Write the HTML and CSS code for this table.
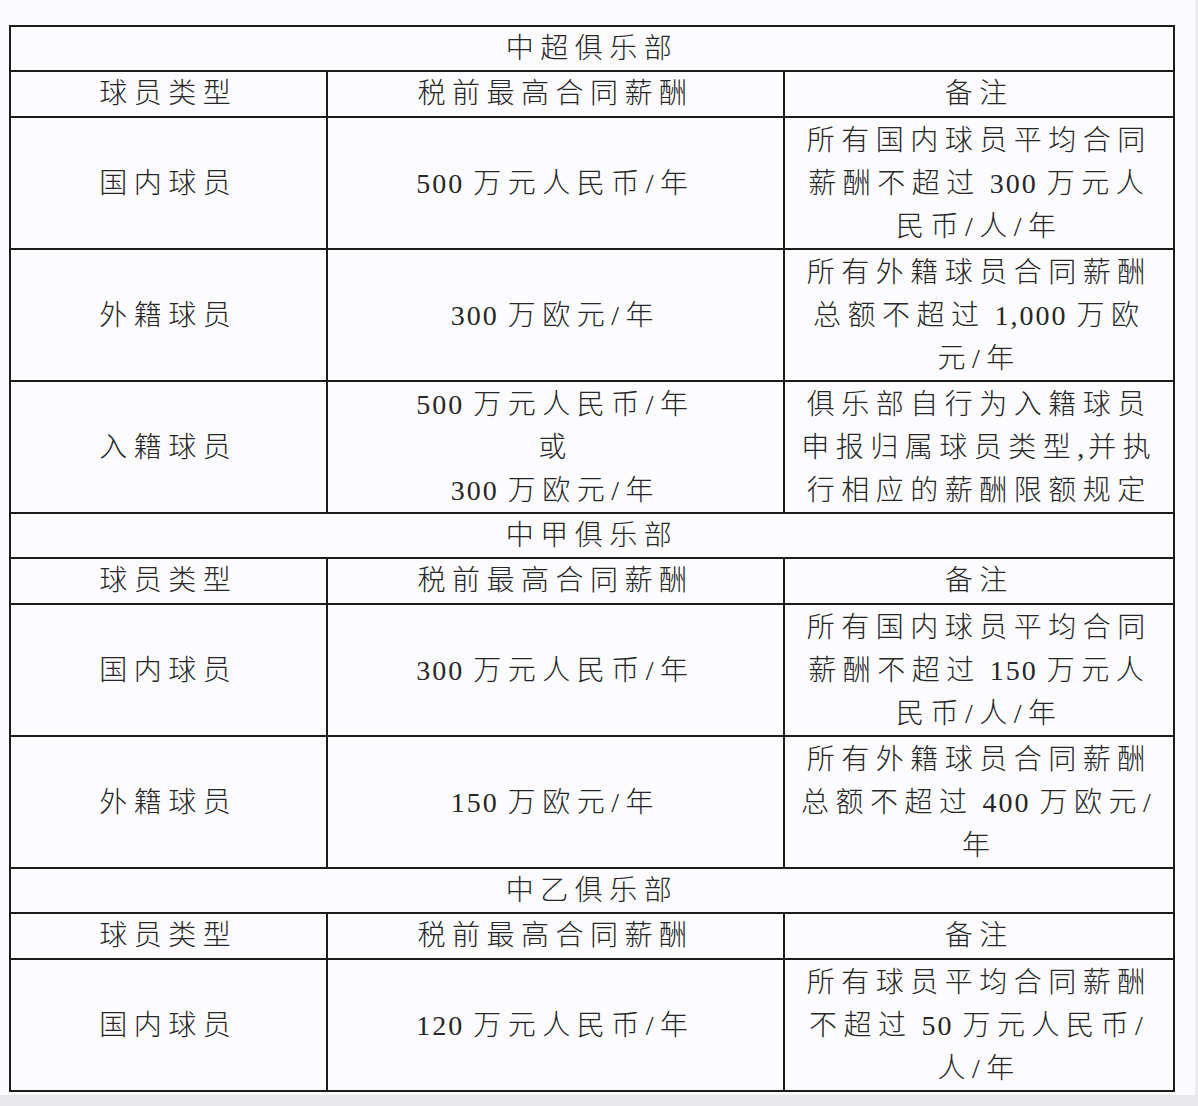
FILE: index.html
```html
<!DOCTYPE html>
<html lang="zh-CN">
<head>
<meta charset="utf-8">
<title>俱乐部薪酬限额</title>
<link rel="stylesheet" href="styles.css">
</head>
<body>
<div class="page">
  <table class="salary">
    <colgroup>
      <col class="c1"><col class="c2"><col class="c3">
    </colgroup>
    <tbody>
      <tr class="title"><td colspan="3">中超俱乐部</td></tr>
      <tr class="head"><td>球员类型</td><td>税前最高合同薪酬</td><td>备注</td></tr>
      <tr class="data">
        <td>国内球员</td>
        <td><span class="num">500 </span>万元人民币/年</td>
        <td>所有国内球员平均合同<br>薪酬不超过<span class="num"> 300 </span>万元人<br>民币/人/年</td>
      </tr>
      <tr class="data">
        <td>外籍球员</td>
        <td><span class="num">300 </span>万欧元/年</td>
        <td>所有外籍球员合同薪酬<br>总额不超过<span class="num"> 1,000 </span>万欧<br>元/年</td>
      </tr>
      <tr class="data">
        <td>入籍球员</td>
        <td><span class="num">500 </span>万元人民币/年<br>或<br><span class="num">300 </span>万欧元/年</td>
        <td>俱乐部自行为入籍球员<br>申报归属球员类型<span class="comma">,</span>并执<br>行相应的薪酬限额规定</td>
      </tr>
      <tr class="title"><td colspan="3">中甲俱乐部</td></tr>
      <tr class="head"><td>球员类型</td><td>税前最高合同薪酬</td><td>备注</td></tr>
      <tr class="data">
        <td>国内球员</td>
        <td><span class="num">300 </span>万元人民币/年</td>
        <td>所有国内球员平均合同<br>薪酬不超过<span class="num"> 150 </span>万元人<br>民币/人/年</td>
      </tr>
      <tr class="data">
        <td>外籍球员</td>
        <td><span class="num">150 </span>万欧元/年</td>
        <td>所有外籍球员合同薪酬<br>总额不超过<span class="num"> 400 </span>万欧元/<br>年</td>
      </tr>
      <tr class="title"><td colspan="3">中乙俱乐部</td></tr>
      <tr class="head"><td>球员类型</td><td>税前最高合同薪酬</td><td>备注</td></tr>
      <tr class="data">
        <td>国内球员</td>
        <td><span class="num">120 </span>万元人民币/年</td>
        <td>所有球员平均合同薪酬<br>不超过<span class="num"> 50 </span>万元人民币/<br>人/年</td>
      </tr>
    </tbody>
  </table>
</div>
<div class="strip"></div>
</body>
</html>
```

FILE: styles.css
```css
html, body {
  margin: 0;
  padding: 0;
}

body {
  background: #fbfbfd;
  font-family: "Liberation Serif", "Noto Sans CJK SC", serif;
  color: #262626;
  width: 1198px;
  height: 1106px;
  overflow: hidden;
}

.page {
  box-sizing: border-box;
  height: 1095px;
  padding: 25px 0 0 9px;
  border-right: 3px solid #ececef;
  width: 1198px;
}

.strip {
  height: 11px;
  background: #e8e8ea;
}

.salary {
  table-layout: fixed;
  border-collapse: separate;
  border-spacing: 0;
  width: 1166px;
  border-top: 2px solid #1c1c1c;
  border-left: 2px solid #1c1c1c;
  background: #fcfcfe;
}

.c1 { width: 316px; }
.c2 { width: 457px; }
.c3 { width: 389px; }

.salary td {
  padding: 0;
  border-right: 2px solid #1c1c1c;
  border-bottom: 2px solid #1c1c1c;
  text-align: center;
  vertical-align: middle;
  font-size: 28px;
  font-weight: 300;
  letter-spacing: 6.5px;
  line-height: 43px;
  white-space: nowrap;
}

.title td {
  height: 43px;
  line-height: 40px;
}

.head td {
  height: 44px;
  line-height: 40px;
}

.data td {
  height: 130px;
}

.num {
  letter-spacing: 2px;
}

.comma {
  letter-spacing: 4px;
}
```
